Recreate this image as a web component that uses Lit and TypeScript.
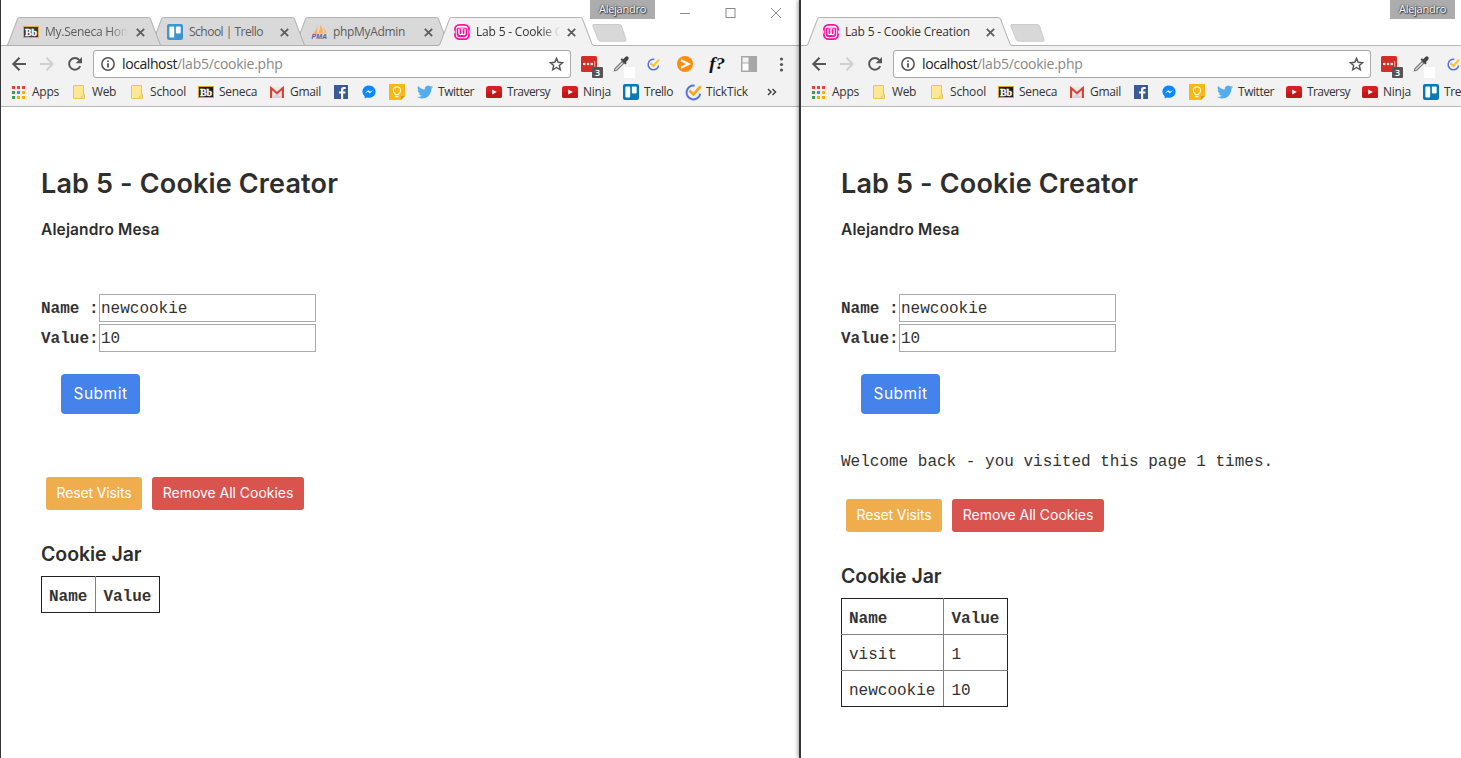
import { LitElement, html, css, svg, nothing } from "lit";
import { customElement, property } from "lit/decorators.js";
import { styleMap } from "lit/directives/style-map.js";

/** Text that is tracked so that it takes exactly `w` pixels. */
@customElement("fit-text")
class FitText extends LitElement {
  @property({ type: Number }) w = 0;
  @property() text = "";
  static styles = css`
    :host { display: inline-block; white-space: pre; }
  `;
  render() {
    return html`<span>${this.text}</span>`;
  }
  updated() {
    const s = this.renderRoot.querySelector("span") as HTMLElement;
    if (!s || !this.w) return;
    s.style.letterSpacing = "0";
    const natural = s.getBoundingClientRect().width;
    s.style.letterSpacing = (this.w - natural) / this.text.length + "px";
  }
}

const box = (w: number, h: number, body: unknown) =>
  html`<svg width=${w} height=${h} viewBox="0 0 ${w} ${h}">${body}</svg>`;

const bb = (dim: boolean) => box(16, 12, svg`
  <rect x=".5" y=".5" width="15" height="11" fill=${dim ? "#3a3a3a" : "#1d1d1d"} stroke=${dim ? "#d9ae4e" : "#d9a520"}/>
  <text x="8" y="9.600" font-family="Liberation Serif, serif" font-weight="bold" font-size="10" text-anchor="middle" fill="#fff" stroke="#fff" stroke-width=".3">Bb</text>`);

const trello = (c: string) => box(16, 16, svg`
  <rect width="16" height="16" rx="2" fill=${c}/>
  <rect x="2.400" y="2.400" width="4.800" height="11" rx="1" fill="#fff"/>
  <rect x="8.900" y="2.400" width="4.800" height="7" rx="1" fill="#fff"/>`);

const pma = box(17, 16, svg`
  <path d="M6.200 1.200 6.400 9.800 1.400 10.400Q5.200 6.800 6.200 1.200Z" fill="#f6b26b"/>
  <path d="M9 .4Q12 4.600 12.400 9.200L7.400 9.800Q9.400 5 9 .4Z" fill="#f9b25c"/>
  <path d="M12.400 3Q15 6 15.600 9.400L13.200 9.200Q13.300 6 12.400 3Z" fill="#f6b878"/>
  <text x="8.300" y="15.400" font-family="Liberation Sans, sans-serif" font-weight="bold" font-style="italic" font-size="6.800" text-anchor="middle" textLength="15.500" lengthAdjust="spacingAndGlyphs" fill="#5b5f8d">PMA</text>`);

const wamp = box(16, 16, svg`
  <rect x=".9" y=".9" width="14.200" height="14.200" rx="4.600" fill="#fff" stroke="#fb12a0" stroke-width="1.800"/>
  <rect x="2.800" y="2.800" width="10.400" height="10.400" rx="3" fill="#ffb3df"/>
  <path d="M0 6.500V9.500M16 6.500V9.500" stroke="#f7d3e9" stroke-width="2"/>
  <path d="M4.700 4.200V9Q4.700 11.300 6.300 11.300T8 9.200V6.200M8 9.200Q8 11.300 9.700 11.300T11.300 9V4.200" fill="none" stroke="#fb0d9b" stroke-width="4" stroke-linejoin="round"/>
  <path d="M4.900 4.900V8.800Q4.900 10.700 6.400 10.700T8 8.800V6M8 8.800Q8 10.700 9.600 10.700T11.100 8.800V4.900" fill="none" stroke="#fff" stroke-width="1.300"/>`);

const closeX = html`<svg width="9" height="9" viewBox="0 0 9 9"><path d="M.8.8 8.200 8.200M8.200.8.8 8.200" stroke="#5a5a5a" stroke-width="1.700"/></svg>`;

const apps = box(13, 13, svg`
  ${["#ea4335", "#ea4335", "#ea4335", "#34a05a", "#4285f4", "#fbab06", "#34a05a", "#fbab06", "#fbab06"].map(
    (c, i) => svg`<rect x=${(i % 3) * 5} y=${Math.floor(i / 3) * 5} width="3" height="3" fill=${c}/>`)}`);

const folder = box(12, 14, svg`
  <path d="M.5.5H10.500V9.500H11.500V13.500H.5Z" fill="#ffe793" stroke="#e9c65a"/>
  <path d="M8.500 13.500V11.500H10V9.500" fill="none" stroke="#e9c65a"/>`);

const gmail = box(14, 11, svg`
  <rect width="14" height="11" rx="1" fill="#e9e7e7"/>
  <path d="M2 11 7 6.400 12 11Z" fill="#d5d3d3"/>
  <path d="M1.100 11V1L7 6.200 12.900 1V11" fill="none" stroke="#d9412f" stroke-width="2.100"/>`);

const facebook = box(14, 14, svg`
  <rect width="14" height="14" fill="#3b5998"/>
  <path d="M9.200 14V8.600H11.300L11.600 6.400H9.200V5.100Q9.200 4.100 10.300 4.100H11.700V2.100Q11 2 9.900 2 7 2 7 4.800V6.400H5V8.600H7V14Z" fill="#fff"/>`);

const messenger = box(14, 14, svg`
  <path d="M7 .6C3.200.6.4 3.300.4 6.700Q.4 9.500 2.700 11.400V13.600L4.900 12.500Q6 12.800 7 12.800C10.800 12.800 13.600 10 13.600 6.700S10.800.6 7 .6Z" fill="#0b87ff"/>
  <path d="M2.900 8.500 6.200 5 7.900 6.700 11.100 5 7.800 8.500 6.100 6.800Z" fill="#fff"/>`);

const keep = box(16, 16, svg`
  <path d="M0 0H16V12L12 16H0Z" fill="#f5b912"/><path d="M16 12H12V16Z" fill="#d89c0a"/>
  <path d="M6.200 9.800Q4.400 8.400 4.400 6.500A3.600 3.600 0 0 1 11.600 6.500Q11.600 8.400 9.800 9.800V10.600H6.200ZM6.300 12.700H9.700" fill="none" stroke="#fff3c9" stroke-width="1.200"/>`);

const twitter = html`<svg width="16" height="14" viewBox="0 2 24 20"><path fill="#55acee" d="M24 4.600a10 10 0 0 1-2.800.8 5 5 0 0 0 2.100-2.700 10 10 0 0 1-3.100 1.200 4.900 4.900 0 0 0-8.400 4.500A14 14 0 0 1 1.700 3.100a4.900 4.900 0 0 0 1.500 6.600 4.900 4.900 0 0 1-2.200-.6v.1a4.900 4.900 0 0 0 3.900 4.800 5 5 0 0 1-2.200.1 4.900 4.900 0 0 0 4.600 3.400A9.900 9.900 0 0 1 0 19.500a14 14 0 0 0 7.500 2.200c9.100 0 14-7.500 14-14v-.6A10 10 0 0 0 24 4.600z"/></svg>`;

const youtube = box(16, 12, svg`
  <rect width="16" height="12" rx="2.600" fill="#d5201f"/><rect y="6" width="16" height="6" rx="2.600" fill="#c4161a"/>
  <path d="M6.200 3.400 10.800 6 6.200 8.600Z" fill="#fff"/>`);

const ticktick = (s: number, check: string) => html`<svg width=${s} height=${s} viewBox="0 0 17 17">
  <path d="M9.600 1.700A6.900 6.900 0 1 0 15.200 9.800" fill="none" stroke="#4f74e3" stroke-width="2"/>
  <path d="M4.400 6.500 8.400 10.400 15.600 2.300" fill="none" stroke=${check} stroke-width="2.700"/></svg>`;

type Mark = { x: number; icon: unknown; pad?: number; label?: string; w?: number };
const marks: Mark[] = [
  { x: 12, icon: apps, pad: 20, label: "Apps", w: 27 },
  { x: 73, icon: folder, pad: 19, label: "Web", w: 24 },
  { x: 131, icon: folder, pad: 19, label: "School", w: 36 },
  { x: 198, icon: bb(false), pad: 21, label: "Seneca", w: 38 },
  { x: 270, icon: gmail, pad: 20, label: "Gmail", w: 31 },
  { x: 334, icon: facebook },
  { x: 362, icon: messenger },
  { x: 389, icon: keep },
  { x: 417, icon: twitter, pad: 21, label: "Twitter", w: 36 },
  { x: 486, icon: youtube, pad: 21, label: "Traversy", w: 43 },
  { x: 562, icon: youtube, pad: 21, label: "Ninja", w: 28 },
  { x: 623, icon: trello("#0079bf"), pad: 21, label: "Trello", w: 29 },
  { x: 685, icon: ticktick(17, "#f9a61a"), pad: 21, label: "TickTick", w: 42 },
  { x: 767, icon: box(10, 8, svg`<path d="M1 1 4 4 1 7M5.500 1 8.500 4 5.500 7" fill="none" stroke="#444" stroke-width="1.500"/>`) },
];

const extensions = [
  box(16, 16, svg`<rect width="16" height="16" rx="1.500" fill="#d32d27"/><g fill="#fff"><circle cx="3.200" cy="8" r="1.300"/><circle cx="7" cy="8" r="1.300"/><circle cx="10.800" cy="8" r="1.300"/></g><path d="M13.700 5V11" stroke="#f3a8a4"/>
    <rect x="11" y="11" width="11" height="11" rx="1" fill="#555"/><text x="16.500" y="20" font-family="Open Sans, sans-serif" font-size="9" font-weight="600" text-anchor="middle" fill="#fff">3</text>`),
  box(16, 16, svg`<rect x="11" y="11" width="11" height="11" fill="#fff"/>
    <path d="M1.300 14.700 2 12.500 9 5.500 10.800 7.300 3.800 14.200Z" fill="#ddd" stroke="#777" stroke-width="1.100"/>
    <path d="M7.500 3.500 9 2.300 10.300 3.200 12.300 1Q14 -.5 15.300 1 16.500 2.300 15 3.900L13 6 13.600 7.200 12.400 8.600Z" fill="#444"/>`),
  html`<div class="tick">${ticktick(13, "#fbc627")}</div>`,
  box(16, 16, svg`<circle cx="8" cy="8" r="8" fill="#ff8c0f"/><path d="M4 4.200 11.500 8 4 11.800" fill="none" stroke="#fff" stroke-width="2.200"/>`),
  box(16, 16, svg`<text x="8.200" y="12.800" font-family="Liberation Serif, serif" font-style="italic" font-weight="bold" font-size="17" text-anchor="middle" textLength="16" lengthAdjust="spacingAndGlyphs" fill="#111">f?</text>`),
  box(16, 16, svg`<rect width="16" height="16" fill="#a7a7a7"/><rect x="1.500" y="1.500" width="6" height="5" fill="#f4f4f4"/><rect x="1.500" y="7.500" width="6" height="7" fill="#fff"/>`),
  box(16, 16, svg`<g fill="#555"><circle cx="8.500" cy="3" r="1.600"/><circle cx="8.500" cy="8.500" r="1.600"/><circle cx="8.500" cy="14" r="1.600"/></g>`),
];

type Tab = { width: number; icon: unknown; title: string; w: number; view: number; inset?: number; end?: number; active?: boolean };

@customElement("browser-window")
class BrowserWindow extends LitElement {
  @property({ attribute: false }) tabs: Tab[] = [];
  @property({ type: Boolean }) controls = false;

  static styles = css`
    :host { display: flex; flex-direction: column; box-sizing: border-box; width: 800px; height: 758px; flex: none;
      border-left: 1px solid #35363a; background: #fff; position: relative;
      font: 12px/16px "Open Sans", "Noto Sans", sans-serif; color: #333; }
    svg { display: block; flex: none; overflow: visible; }
    .strip { height: 46px; display: flex; align-items: flex-end; padding-left: 5px; box-sizing: border-box; flex: none;
      background: linear-gradient(#b4b4b4, #b4b4b4) 0 45px / 100% 1px no-repeat; }
    .tab { height: 29px; display: grid; flex: none; position: relative; margin-right: -12px; color: #5c5c5c; }
    .tab > * { grid-area: 1 / 1; }
    .inner { display: flex; align-items: center; padding-top: 1px; position: relative; }
    .inner .icon { width: 22px; flex: none; }
    .title { overflow: hidden; white-space: nowrap; flex: none; }
    .fade { -webkit-mask: linear-gradient(90deg, #000 78%, transparent); mask: linear-gradient(90deg, #000 78%, transparent); }
    .active { color: #333; }
    .push { margin-left: auto; }
    .plus { margin: 0 0 4px 9.500px; }
    .name { position: absolute; left: 589px; top: 0; width: 65px; height: 19px; background: #acacac; color: #fff;
      font-size: 11px; line-height: 18px; text-align: center; text-shadow: 0 0 2px #333, 1px 1px 1px #444, 0 0 1px #444; }
    .controls { position: absolute; left: 679px; top: 8px; display: flex; gap: 34.500px; }
    .bar { height: 36px; flex: none; background: #f2f2f2; display: flex; align-items: center; padding-left: 11px; }
    .nav { display: flex; gap: 14px; width: 81px; flex: none; }
    .omni { box-sizing: border-box; width: 478px; height: 28px; flex: none; background: #fff; border: 1px solid #a8a8a8; border-radius: 3px;
      display: flex; align-items: center; padding: 0 7px; font-size: 14px; line-height: 20px; }
    .url { margin-left: 7px; white-space: nowrap; color: #888; }
    .host { color: #222; }
    .star { margin-left: auto; margin-right: -0.500px; }
    .ext { display: flex; margin-left: 10px; gap: 16px; }
    .tick { padding: 2px 1.500px 0 1.500px; }
    .marks { height: 24px; flex: none; background: #f2f2f2; display: flex; border-bottom: 1px solid #b4b4b4; padding: 0 0 0 11px; overflow: hidden; }
    .mark { display: flex; align-items: center; height: 20px; flex: none; white-space: nowrap; }
    .mark .icon { flex: none; }
  `;

  private tab(t: Tab, i: number) {
    const w = t.width;
    const fade = t.w > t.view;
    return html`<div class="tab ${t.active ? "active" : ""}" style=${styleMap({ width: w + "px", zIndex: t.active ? "20" : String(10 - i) })}>
      <svg width=${w} height="29" viewBox="0 0 ${w} 29">
        <path d="M0 29 L.5 28.500 Q1.500 28 2 27 L11.500 2 Q12.200.5 13.500.5 H${w - 13.5} Q${w - 12.2}.5 ${w - 11.5} 2 L${w - 2} 27 Q${w - 1.5} 28 ${w - 0.5} 28.500 L${w} 29Z" fill=${t.active ? "#f2f2f2" : "#d9d9d9"}/>
        <path d="M0 28.500 Q1.500 28.500 2 27 L11.500 2 Q12.200.5 13.500.5 H${w - 13.5} Q${w - 12.2}.5 ${w - 11.5} 2 L${w - 2} 27 Q${w - 1.5} 28.500 ${w} 28.500 ${t.active ? "" : "H0"}" fill="none" stroke="#b0b0b0"/>
      </svg>
      <div class="inner" style=${styleMap({ paddingLeft: (t.inset ?? 17) + "px", paddingRight: (t.end ?? 17) + "px" })}>
        <div class="icon">${t.icon}</div>
        <div class="title ${fade ? "fade" : ""}" style=${styleMap({ width: t.view + "px" })}><fit-text .w=${t.w} .text=${t.title}></fit-text></div>
        <div class="push">${closeX}</div>
      </div>
    </div>`;
  }

  render() {
    // The window that runs past the screen edge draws only the items that start on screen.
    const shownExt = this.controls ? extensions : extensions.slice(0, 3);
    const shownMarks = this.controls ? marks : marks.slice(0, 12);
    return html`
      <div class="strip">
        ${this.tabs.map((t, i) => this.tab(t, i))}
        <svg class="plus" width="36" height="18" viewBox="0 0 36 18">
          <path d="M2 .5H27.500Q29 .5 29.500 2L34 15.500Q34.500 17.200 33 17.200H8.500Q6.800 17.200 6.200 15.500L.8 2Q.4.5 2 .5Z" fill="#d8d8d8" stroke="#cbcbcb"/>
        </svg>
      </div>
      <div class="name"><fit-text .w=${47} text="Alejandro"></fit-text></div>
      ${this.controls ? html`<div class="controls">
        ${box(11, 11, svg`<path d="M0 5.500H10" stroke="#8a8a8a"/>`)}
        ${box(11, 11, svg`<rect x="0" y=".5" width="9" height="9" fill="none" stroke="#8a8a8a"/>`)}
        ${box(11, 11, svg`<path d="M0 0 10 10M10 0 0 10" stroke="#8a8a8a"/>`)}
      </div>` : nothing}
      <div class="bar">
        <div class="nav">
          ${box(14, 14, svg`<path d="M14 7H1.500M7.500.8 1.300 7 7.500 13.200" fill="none" stroke="#555" stroke-width="2"/>`)}
          ${box(14, 14, svg`<path d="M0 7H12.500M6.500.8 12.700 7 6.500 13.200" fill="none" stroke="#d0d0d0" stroke-width="2"/>`)}
          ${box(14, 14, svg`<path d="M12.200 9.200A5.800 5.800 0 1 1 11.300 3.100" fill="none" stroke="#555" stroke-width="2"/><path d="M14 0V6.300H7.700Z" fill="#555"/>`)}
        </div>
        <div class="omni">
          ${box(14, 14, svg`<circle cx="7" cy="7" r="6.200" fill="none" stroke="#555" stroke-width="1.500"/><path d="M7 6.200V10.500M7 3.400V5" stroke="#555" stroke-width="1.800"/>`)}
          <div class="url"><fit-text class="host" .w=${55} text="localhost"></fit-text><fit-text .w=${105.5} text="/lab5/cookie.php"></fit-text></div>
          <svg class="star" width="15" height="14" viewBox="0 0 15 14"><path d="M7.500 1.300 9.200 5.300 13.600 5.700 10.300 8.500 11.300 12.800 7.500 10.500 3.700 12.800 4.700 8.500 1.400 5.700 5.800 5.300Z" fill="none" stroke="#555" stroke-width="1.400"/></svg>
        </div>
        <div class="ext">${shownExt}</div>
      </div>
      <div class="marks">
        ${shownMarks.map((m, i) => html`<div class="mark" style=${styleMap({ width: (marks[i + 1]?.x ?? m.x + 16) - m.x + "px" })}>
          <div class="icon" style=${styleMap({ width: m.pad ? m.pad + "px" : "auto" })}>${m.icon}</div>
          ${m.label ? html`<fit-text .w=${m.w} .text=${m.label}></fit-text>` : nothing}
        </div>`)}
      </div>
      <slot></slot>`;
  }
}

@customElement("cookie-page")
class CookiePage extends LitElement {
  @property({ type: Number }) visits = 0;
  @property({ attribute: false }) cookies: [string, string][] = [];

  static styles = css`
    :host { display: block; padding: 60px 40px 0; font: 16px/22px "Liberation Mono", monospace; color: #333; }
    .h { font-family: Inter, "Open Sans", sans-serif; font-weight: 600; margin: 0; color: #2e2e2e; }
    h1.h { font-size: 27px; line-height: 34px; }
    h4.h { font-size: 15.500px; line-height: 20px; margin-top: 19px; }
    h3.h { font-size: 19.500px; line-height: 24px; margin-top: 32px; }
    .form { margin-top: 54px; display: grid; row-gap: 2px; }
    .row { display: flex; align-items: center; height: 28px; }
    .label { width: 58px; font-weight: 700; white-space: pre; padding-top: 2px; }
    .input { box-sizing: border-box; width: 217px; height: 28px; border: 1px solid #a9a9a9; padding: 1px 1px 0; line-height: 27px; }
    .btn { display: flex; justify-content: center; color: #fff; box-sizing: border-box;
      font-family: Inter, "Open Sans", sans-serif; font-size: 14px; height: 33px; line-height: 32px; border-radius: 3px; }
    .submit { margin: 22px 0 0 20px; width: 79px; height: 40px; background: #4582ec; font-size: 15.500px; line-height: 39px; border-radius: 4px; }
    .message { height: 22px; margin-top: 37px; }
    .actions { display: flex; gap: 10px; margin: 26px 0 0 5px; }
    .quiet .actions { margin-top: 63px; }
    .reset { width: 96px; background: #f0ad4e; }
    .remove { width: 152px; background: #d9534f; }
    table { border-collapse: collapse; margin-top: 10px; border: 1px solid #222; }
    td, th { box-sizing: border-box; border: 1px solid #808080; height: 36px; padding: 4px 8px 0 7px; text-align: left; line-height: 22px; }
    tr:first-child > * { border-top-color: #222; }
    tr:last-child > * { border-bottom-color: #222; }
    tr > :first-child { border-left-color: #222; }
    tr > :last-child { border-right-color: #222; }
  `;

  render() {
    return html`<div class=${this.visits ? "" : "quiet"}>
      <h1 class="h"><fit-text .w=${297} text="Lab 5 - Cookie Creator"></fit-text></h1>
      <h4 class="h"><fit-text .w=${118.5} text="Alejandro Mesa"></fit-text></h4>
      <div class="form">
        <div class="row"><div class="label">Name :</div><div class="input">newcookie</div></div>
        <div class="row"><div class="label">Value:</div><div class="input">10</div></div>
      </div>
      <div class="btn submit"><fit-text .w=${54} text="Submit"></fit-text></div>
      ${this.visits ? html`<div class="message">Welcome back - you visited this page ${this.visits} times.</div>` : nothing}
      <div class="actions">
        <div class="btn reset"><fit-text .w=${75} text="Reset Visits"></fit-text></div>
        <div class="btn remove"><fit-text .w=${130.5} text="Remove All Cookies"></fit-text></div>
      </div>
      <h3 class="h"><fit-text .w=${100.5} text="Cookie Jar"></fit-text></h3>
      <table>
        <tr><th>Name</th><th>Value</th></tr>
        ${this.cookies.map(([n, v]) => html`<tr><td>${n}</td><td>${v}</td></tr>`)}
      </table>
    </div>`;
  }
}

@customElement("app-root")
class AppRoot extends LitElement {
  static styles = css`
    :host { display: flex; width: 1461px; height: 758px; overflow: hidden; background: #fff; }
    .right { box-shadow: -1px 0 0 #35363a, -2px 0 4px rgba(0, 0, 0, 0.4); z-index: 30; }
  `;
  private left: Tab[] = [
    { width: 156, icon: bb(true), title: "My.Seneca Home", w: 93, view: 83 },
    { width: 156, icon: trello("#3d96cf"), title: "School | Trello", w: 74, view: 84 },
    { width: 156, icon: pma, title: "phpMyAdmin", w: 72, view: 84 },
    { width: 156, icon: wamp, title: "Lab 5 - Cookie Creation", w: 125, view: 84, inset: 16, end: 18, active: true },
  ];
  private rightTabs: Tab[] = [
    { width: 206, icon: wamp, title: "Lab 5 - Cookie Creation", w: 125, view: 130, active: true },
  ];
  render() {
    return html`
      <browser-window controls .tabs=${this.left}><cookie-page></cookie-page></browser-window>
      <browser-window class="right" .tabs=${this.rightTabs}>
        <cookie-page .visits=${1} .cookies=${[["visit", "1"], ["newcookie", "10"]] as [string, string][]}></cookie-page>
      </browser-window>`;
  }
}
